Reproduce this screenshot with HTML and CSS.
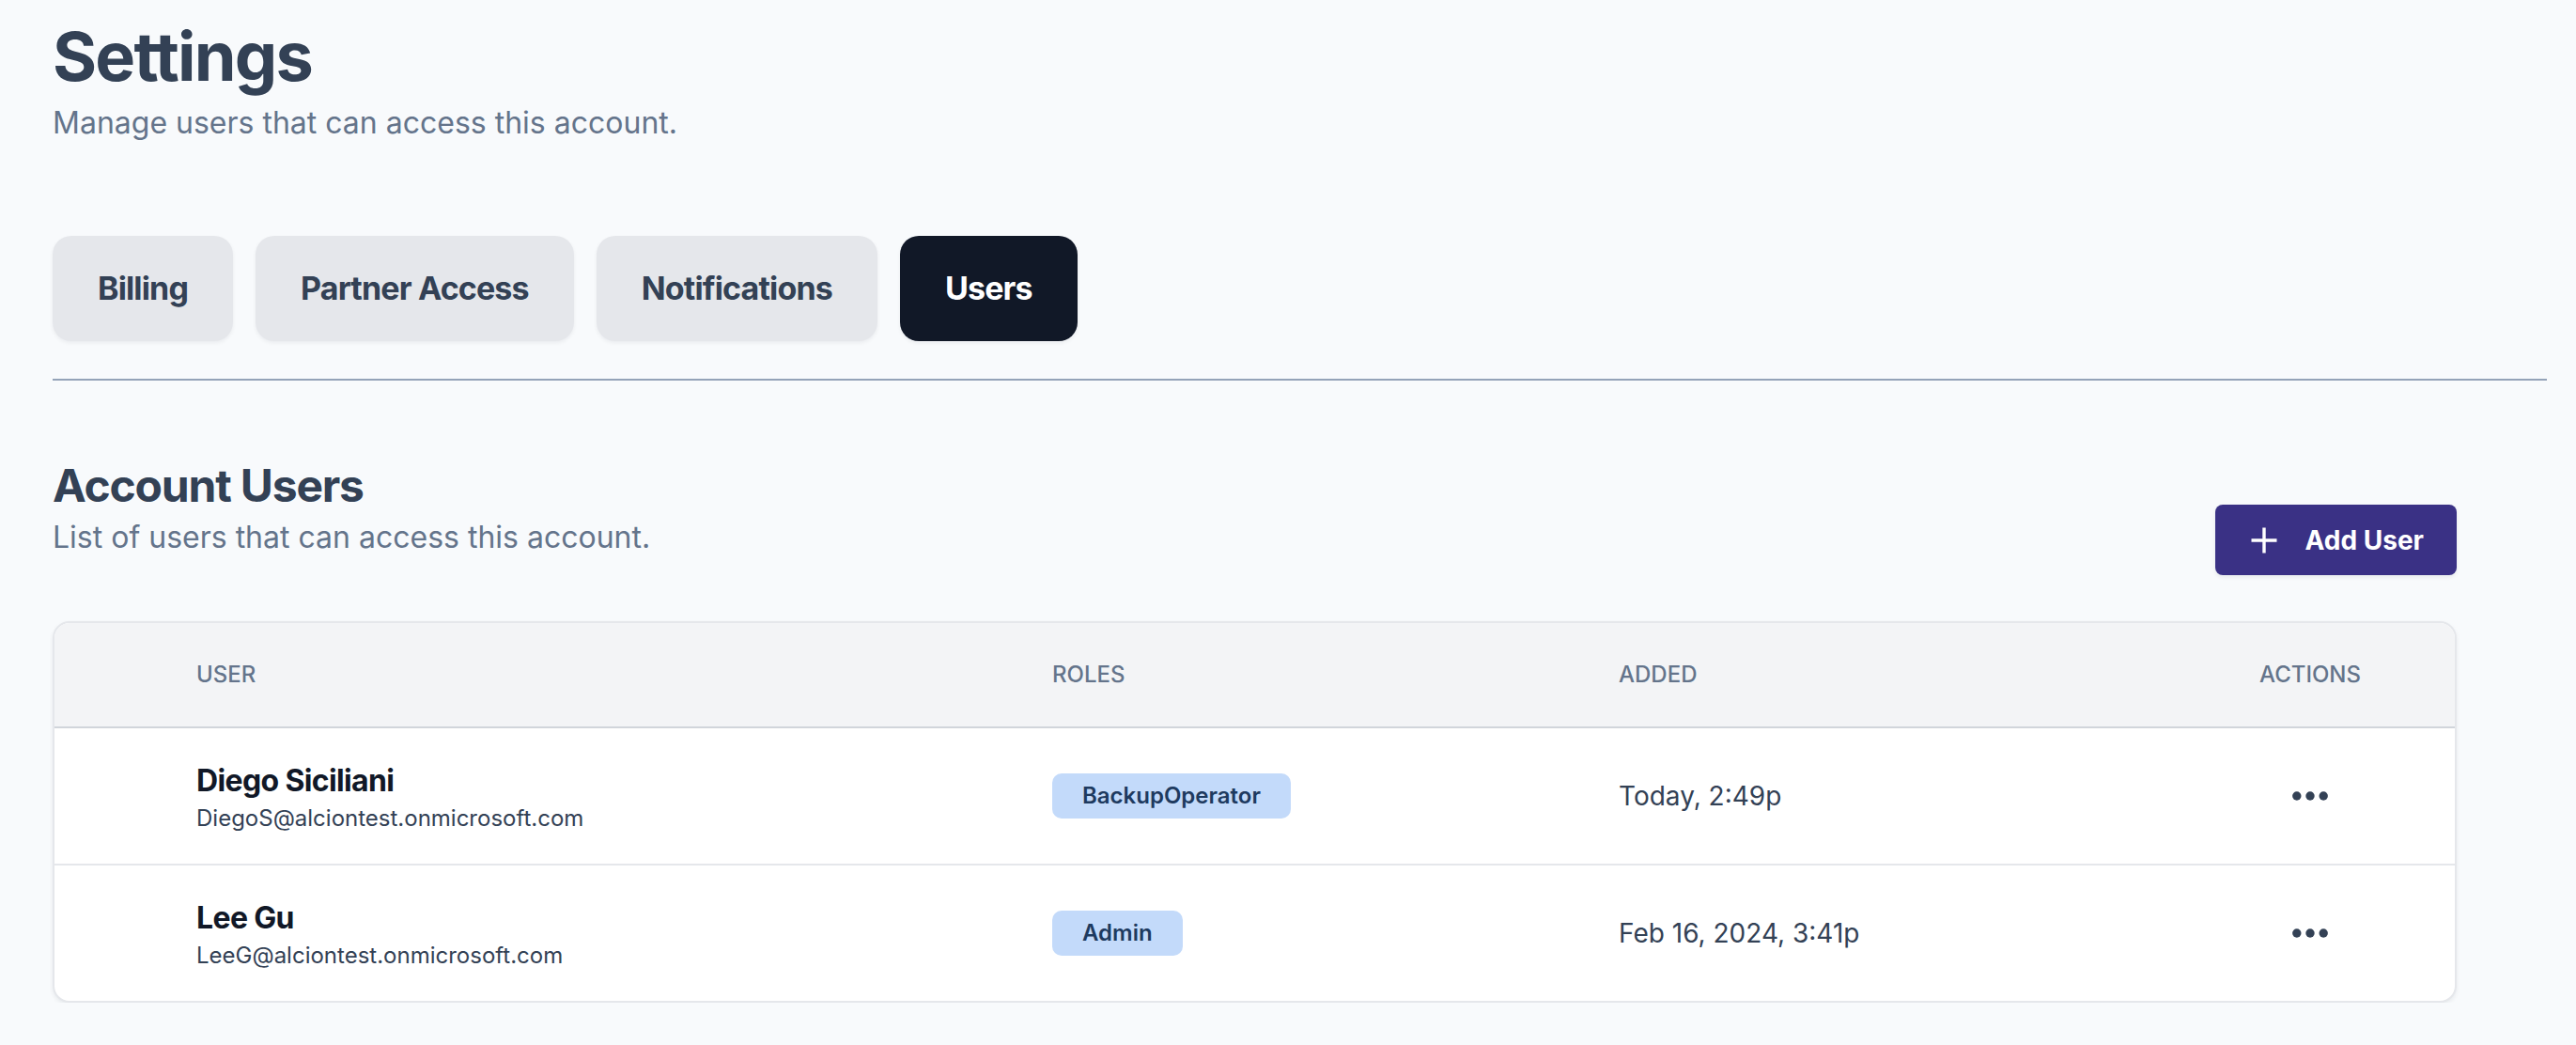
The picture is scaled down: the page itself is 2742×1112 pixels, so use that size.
FILE: index.html
```html
<!DOCTYPE html>
<html lang="en">
<head>
<meta charset="utf-8">
<title>Settings</title>
<link rel="stylesheet" href="styles.css">
</head>
<body>
<main class="page">
  <header class="page-head">
    <h1 class="page-title">Settings</h1>
    <p class="subtitle">Manage users that can access this account.</p>
  </header>

  <nav class="tabs">
    <button class="tab">Billing</button>
    <button class="tab">Partner Access</button>
    <button class="tab">Notifications</button>
    <button class="tab tab-active">Users</button>
  </nav>

  <div class="divider"></div>

  <section class="users">
    <div class="users-head">
      <div class="users-intro">
        <h2 class="section-title">Account Users</h2>
        <p class="subtitle subtitle-tight">List of users that can access this account.</p>
      </div>
      <button class="add-btn">
        <svg class="plus" width="30" height="30" viewBox="0 0 30 30" aria-hidden="true">
          <path d="M15 1.5V28.5M1.5 15H28.5" stroke="#ffffff" stroke-width="3.4" fill="none"/>
        </svg>
        <span>Add User</span>
      </button>
    </div>

    <div class="table">
      <div class="row row-head">
        <span></span>
        <span class="th">User</span>
        <span class="th">Roles</span>
        <span class="th">Added</span>
        <span class="th th-center">Actions</span>
      </div>
      <div class="row">
        <span></span>
        <div class="user">
          <div class="user-name">Diego Siciliani</div>
          <div class="user-email">DiegoS@alciontest.onmicrosoft.com</div>
        </div>
        <div><span class="badge">BackupOperator</span></div>
        <div class="date">Today, 2:49p</div>
        <div class="actions">
          <svg width="38" height="10" viewBox="0 0 38 10" aria-hidden="true">
            <circle cx="4.8" cy="5" r="4.7" fill="#334155"/>
            <circle cx="19" cy="5" r="4.7" fill="#334155"/>
            <circle cx="33.2" cy="5" r="4.7" fill="#334155"/>
          </svg>
        </div>
      </div>
      <div class="row">
        <span></span>
        <div class="user">
          <div class="user-name">Lee Gu</div>
          <div class="user-email">LeeG@alciontest.onmicrosoft.com</div>
        </div>
        <div><span class="badge">Admin</span></div>
        <div class="date">Feb 16, 2024, 3:41p</div>
        <div class="actions">
          <svg width="38" height="10" viewBox="0 0 38 10" aria-hidden="true">
            <circle cx="4.8" cy="5" r="4.7" fill="#334155"/>
            <circle cx="19" cy="5" r="4.7" fill="#334155"/>
            <circle cx="33.2" cy="5" r="4.7" fill="#334155"/>
          </svg>
        </div>
      </div>
    </div>
  </section>
</main>
</body>
</html>
```

FILE: styles.css
```css
* { box-sizing: border-box; }

html, body {
  margin: 0;
  padding: 0;
  background: #f8fafc;
}

body {
  font-family: Inter, "Noto Sans", "Liberation Sans", sans-serif;
  color: #334155;
}

.page {
  padding: 20px 31px 0 56px;
}

.page-title {
  margin: 0;
  font-size: 72px;
  line-height: 80px;
  font-weight: 700;
  letter-spacing: -0.025em;
  color: #334155;
}

.subtitle {
  margin: 11px 0 0;
  font-size: 32px;
  line-height: 40px;
  font-weight: 400;
  color: #64748b;
}

.subtitle-tight {
  margin-top: 3px;
}

.tabs {
  display: flex;
  gap: 24px;
  margin-top: 100px;
}

.tab {
  font-family: inherit;
  border: none;
  margin: 0;
  padding: 28px 48px;
  font-size: 34px;
  line-height: 56px;
  font-weight: 700;
  letter-spacing: -0.025em;
  color: #334155;
  background: #e5e7eb;
  border-radius: 20px;
  box-shadow: 0 2px 4px rgba(15, 23, 42, 0.06);
}

.tab-active {
  background: #111827;
  color: #ffffff;
}

.divider {
  margin-top: 40px;
  height: 2px;
  background: #94a3b8;
}

.users {
  margin-top: 80px;
  margin-right: 96px;
}

.users-head {
  display: flex;
  justify-content: space-between;
  align-items: flex-start;
}

.section-title {
  margin: 0;
  font-size: 48px;
  line-height: 64px;
  font-weight: 700;
  letter-spacing: -0.025em;
  color: #334155;
}

.add-btn {
  font-family: inherit;
  margin-top: 52px;
  display: flex;
  align-items: center;
  gap: 29px;
  height: 75px;
  padding: 0 35px 0 37px;
  border: none;
  border-radius: 8px;
  background: #3a3185;
  color: #ffffff;
  font-size: 28px;
  line-height: 40px;
  font-weight: 700;
  box-shadow: 0 2px 4px rgba(15, 23, 42, 0.08);
}

.plus { display: block; }

.table {
  margin-top: 49px;
  background: #ffffff;
  border: 2px solid #e5e7eb;
  border-radius: 18px;
  overflow: hidden;
  box-shadow: 0 2px 4px rgba(15, 23, 42, 0.07);
}

.row {
  display: grid;
  grid-template-columns: 151px 911px 603px 1fr 308px;
  align-items: center;
  padding: 32px 0;
  border-top: 2px solid #e5e7eb;
}

.row-head {
  background: #f3f4f6;
  padding: 39px 0 39px;
  border-top: none;
  border-bottom: 2px solid #d1d5db;
}

.row-head + .row {
  border-top: none;
}

.th {
  font-size: 24px;
  line-height: 32px;
  font-weight: 500;
  text-transform: uppercase;
  color: #64748b;
}

.th-center { text-align: center; }

.user-name {
  font-size: 32px;
  line-height: 48px;
  font-weight: 700;
  letter-spacing: -0.02em;
  color: #111827;
}

.user-email {
  font-size: 24px;
  line-height: 32px;
  font-weight: 400;
  color: #334155;
}

.badge {
  display: inline-block;
  padding: 8px 32px;
  font-size: 24px;
  line-height: 32px;
  font-weight: 600;
  color: #1e3a5f;
  background: #c3dafa;
  border-radius: 10px;
}

.date {
  font-size: 28px;
  line-height: 40px;
  color: #334155;
}

.actions {
  display: flex;
  justify-content: center;
}
```
